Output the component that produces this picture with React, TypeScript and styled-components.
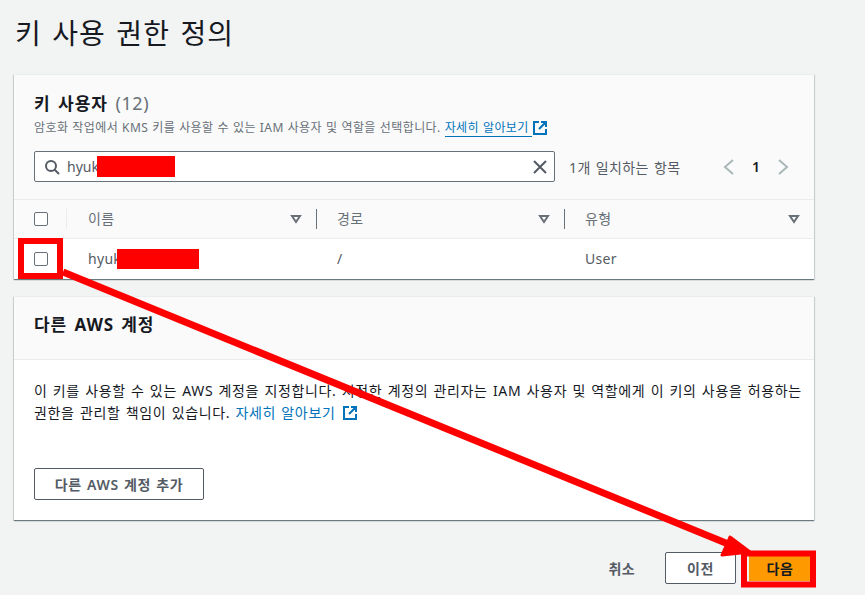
import React from "react";
import styled, { createGlobalStyle } from "styled-components";

const GlobalStyle = createGlobalStyle`
  html, body {
    margin: 0;
    padding: 0;
    background: #f2f3f3;
  }
  body {
    font-family: "Noto Sans", "Noto Sans CJK KR", sans-serif;
    color: #16191f;
  }
`;

const Page = styled.div`
  position: relative;
  width: 865px;
  height: 595px;
  overflow: hidden;
  box-sizing: border-box;
  padding: 0 51px 0 14px;
`;

const Title = styled.h1`
  margin: 0;
  height: 74px;
  padding: 13px 0 0 1px;
  box-sizing: border-box;
  font-size: 28px;
  line-height: 40px;
  font-weight: 400;
  letter-spacing: 1.1px;
  word-spacing: 2px;
  color: #16191f;
`;

const Card = styled.section<{ $height: number }>`
  height: ${(p) => p.$height}px;
  box-sizing: border-box;
  background: #fff;
  box-shadow: 0 1px 1px 0 rgba(0, 28, 36, 0.45), 1px 1px 1px 0 rgba(0, 28, 36, 0.1),
    -1px 1px 1px 0 rgba(0, 28, 36, 0.1);
  border-top: 1px solid #eaeded;
  margin-bottom: 17px;
  display: flex;
  flex-direction: column;
`;

const UsersHeader = styled.div`
  background: #fafafa;
  height: 125px;
  box-sizing: border-box;
  padding: 16px 20px 0;
  border-bottom: 1px solid #eaeded;
`;

const CardTitle = styled.h2`
  margin: 0;
  font-size: 17px;
  line-height: 24px;
  font-weight: 700;
  letter-spacing: 1px;
  word-spacing: 2px;
  color: #16191f;
`;

const Count = styled.span`
  font-weight: 400;
  font-size: 18px;
  letter-spacing: 0.6px;
  color: #687078;
`;

const Description = styled.p`
  margin: 3px 0 0;
  display: flex;
  align-items: center;
  font-size: 12px;
  line-height: 18px;
  letter-spacing: 0.4px;
  word-spacing: 0.5px;
  white-space: nowrap;
  color: #687078;
`;

const HeaderLink = styled.a`
  color: #0073bb;
  margin-left: 4px;
  padding-right: 3px;
  border-bottom: 1px solid #0073bb;
  line-height: 17px;
`;

const SearchRow = styled.div`
  display: flex;
  align-items: center;
  margin-top: 14px;
`;

const SearchBox = styled.div`
  position: relative;
  width: 521px;
  height: 31px;
  box-sizing: border-box;
  background: #fff;
  border: 1px solid #687078;
  border-radius: 2px;
  display: flex;
  align-items: center;
  padding: 0 6px 0 9px;
  font-size: 14px;
  color: #545b64;
`;

const SearchText = styled.span`
  margin-left: 7px;
  flex: 1;
`;

const Redact = styled.span<{ $left: number; $top: number; $width: number; $height: number }>`
  position: absolute;
  left: ${(p) => p.$left}px;
  top: ${(p) => p.$top}px;
  width: ${(p) => p.$width}px;
  height: ${(p) => p.$height}px;
  background: #ff0000;
`;

const MatchText = styled.span`
  margin-left: 14px;
  font-size: 14px;
  letter-spacing: 0.4px;
  word-spacing: 1px;
  color: #545b64;
  width: 154px;
`;

const Pager = styled.div`
  display: flex;
  align-items: center;
  gap: 17px;
  font-size: 14px;
  font-weight: 600;
  color: #16191f;
`;

const TableRow = styled.div<{ $head?: boolean }>`
  display: grid;
  grid-template-columns: 53px 250px 248px 1fr;
  align-items: center;
  height: 39px;
  box-sizing: border-box;
  background: ${(p) => (p.$head ? "#fafafa" : "#fff")};
  border-bottom: ${(p) => (p.$head ? "1px solid #eaeded" : "none")};
  font-size: 14px;
  letter-spacing: 0.3px;
  color: ${(p) => (p.$head ? "#687078" : "#545b64")};
`;

const CheckCell = styled.div<{ $divided?: boolean }>`
  height: 20px;
  display: flex;
  align-items: center;
  padding-left: 20px;
  border-right: ${(p) => (p.$divided ? "1px solid #eaeded" : "none")};
`;

const Checkbox = styled.span`
  width: 12px;
  height: 12px;
  border: 1px solid #687078;
  border-radius: 2px;
  background: #fff;
`;

const HeadCell = styled.div<{ $divided?: boolean }>`
  height: 20px;
  display: flex;
  align-items: center;
  justify-content: space-between;
  padding: 0 14px 0 20px;
  line-height: 20px;
  border-right: ${(p) => (p.$divided ? "1px solid #687078" : "none")};
  &:nth-child(2) {
    padding-left: 21px;
  }
`;

const BodyCell = styled.div`
  position: relative;
  padding-left: 20px;
  &:nth-child(2) {
    padding-left: 21px;
  }
`;

const AccountHeader = styled.div`
  background: #fafafa;
  height: 63px;
  box-sizing: border-box;
  padding: 16px 20px 0;
  border-bottom: 1px solid #eaeded;
`;

const AccountTitle = styled.h2`
  margin: 0;
  font-size: 17px;
  line-height: 24px;
  font-weight: 700;
  letter-spacing: 0.9px;
  word-spacing: 2px;
`;

const AccountBody = styled.div`
  padding: 20px 10px 0 20px;
  font-size: 14px;
  line-height: 22px;
  letter-spacing: 0.65px;
  word-spacing: 1px;
  word-break: keep-all;
  color: #16191f;
`;

const InlineLink = styled.a`
  color: #0073bb;
`;

const OutlineButton = styled.button<{ $width: number }>`
  width: ${(p) => p.$width}px;
  height: 32px;
  box-sizing: border-box;
  background: #fff;
  border: 1px solid #545b64;
  border-radius: 2px;
  padding: 0;
  font-family: inherit;
  font-size: 14px;
  font-weight: 600;
  letter-spacing: 0.6px;
  word-spacing: 1px;
  color: #545b64;
`;

const AddButton = styled(OutlineButton)`
  display: block;
  margin-top: 44px;
`;

const Footer = styled.div`
  display: flex;
  justify-content: flex-end;
  align-items: center;
  padding-top: 15px;
  margin-right: -1px;
`;

const CancelButton = styled.span`
  font-size: 14px;
  font-weight: 600;
  letter-spacing: 0.4px;
  color: #545b64;
  margin-right: 30px;
`;

const NextButton = styled.button`
  width: 62px;
  height: 26px;
  margin-left: 13px;
  margin-right: 4px;
  box-sizing: border-box;
  background: #ff9900;
  border: none;
  padding: 0;
  font-family: inherit;
  font-size: 14px;
  font-weight: 600;
  letter-spacing: 0.6px;
  color: #16191f;
`;

const Annotation = styled.svg`
  position: absolute;
  left: 0;
  top: 0;
  pointer-events: none;
`;

const SearchIcon = () => (
  <svg width="16" height="16" viewBox="0 0 16 16" fill="none" stroke="#545b64" strokeWidth="2">
    <circle cx="7" cy="7" r="5" />
    <path d="M10.5 10.5 15 15" />
  </svg>
);

const CloseIcon = () => (
  <svg width="16" height="16" viewBox="0 0 16 16" fill="none" stroke="#545b64" strokeWidth="2">
    <path d="M2 2l12 12M14 2 2 14" />
  </svg>
);

const Chevron = ({ flip }: { flip?: boolean }) => (
  <svg width="12" height="16" viewBox="0 0 12 16" fill="none" stroke="#aab7b8" strokeWidth="2">
    <path d={flip ? "M2 1l8 7-8 7" : "M10 1 2 8l8 7"} />
  </svg>
);

const SortIcon = () => (
  <svg width="12" height="10" viewBox="0 0 12 10" fill="none" stroke="#687078" strokeWidth="2" strokeLinejoin="miter">
    <path d="M2 2h8L6 8z" />
  </svg>
);

const ExternalIcon = ({ style }: { style?: React.CSSProperties }) => (
  <svg width="14" height="14" viewBox="0 0 14 14" fill="none" stroke="#0073bb" strokeWidth="2" style={style}>
    <path d="M6 1H1v12h12V8M6 8l6-6M8 1h5v5" />
  </svg>
);

export default function App() {
  return (
    <>
      <GlobalStyle />
      <Page>
        <Title>키 사용 권한 정의</Title>

        <Card $height={205}>
          <UsersHeader>
            <CardTitle>
              키 사용자 <Count>(12)</Count>
            </CardTitle>
            <Description>
              암호화 작업에서 KMS 키를 사용할 수 있는 IAM 사용자 및 역할을 선택합니다.
              <HeaderLink>자세히 알아보기</HeaderLink>
              <ExternalIcon style={{ marginLeft: 1 }} />
            </Description>
            <SearchRow>
              <SearchBox>
                <SearchIcon />
                <SearchText>hyuk</SearchText>
                <CloseIcon />
                <Redact $left={62} $top={4} $width={78} $height={21} />
              </SearchBox>
              <MatchText>1개 일치하는 항목</MatchText>
              <Pager>
                <Chevron />
                <span>1</span>
                <Chevron flip />
              </Pager>
            </SearchRow>
          </UsersHeader>
          <TableRow $head>
            <CheckCell $divided>
              <Checkbox />
            </CheckCell>
            <HeadCell $divided>
              이름
              <SortIcon />
            </HeadCell>
            <HeadCell $divided>
              경로
              <SortIcon />
            </HeadCell>
            <HeadCell>
              유형
              <SortIcon />
            </HeadCell>
          </TableRow>
          <TableRow>
            <CheckCell>
              <Checkbox />
            </CheckCell>
            <BodyCell>
              hyuk
              <Redact $left={50} $top={0} $width={82} $height={20} />
            </BodyCell>
            <BodyCell>/</BodyCell>
            <BodyCell>User</BodyCell>
          </TableRow>
        </Card>

        <Card $height={224}>
          <AccountHeader>
            <AccountTitle>다른 AWS 계정</AccountTitle>
          </AccountHeader>
          <AccountBody>
            이 키를 사용할 수 있는 AWS 계정을 지정합니다. 지정한 계정의 관리자는 IAM 사용자 및 역할에게 이 키의 사용을 허용하는
            권한을 관리할 책임이 있습니다. <InlineLink>자세히 알아보기</InlineLink>{" "}
            <ExternalIcon style={{ verticalAlign: -2, marginLeft: 2 }} />
            <AddButton $width={170}>다른 AWS 계정 추가</AddButton>
          </AccountBody>
        </Card>

        <Footer>
          <CancelButton>취소</CancelButton>
          <OutlineButton $width={71}>이전</OutlineButton>
          <NextButton>다음</NextButton>
        </Footer>

        <Annotation width="865" height="595" viewBox="0 0 865 595">
          <rect x="21" y="241" width="39" height="35" fill="none" stroke="#ff0000" strokeWidth="6" />
          <rect x="744" y="553.5" width="69" height="31" fill="none" stroke="#ff0000" strokeWidth="6" />
          <path d="M63 272 738 548" stroke="#ff0000" strokeWidth="7" fill="none" />
          <path d="M730 537 750 552 722 555z" fill="#ff0000" stroke="#ff0000" strokeWidth="3" strokeLinejoin="round" />
        </Annotation>
      </Page>
    </>
  );
}
